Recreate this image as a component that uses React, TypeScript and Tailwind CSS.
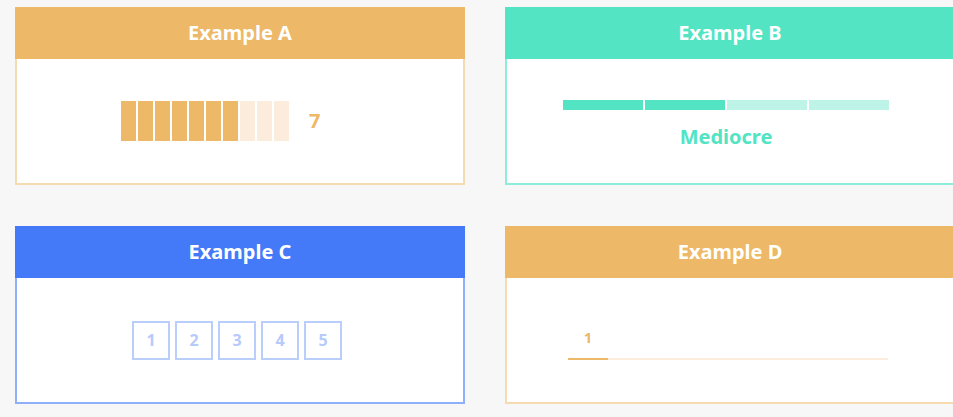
const font = "font-['Noto_Sans','Open_Sans',sans-serif]";

function Card({
  title,
  header,
  border,
  children,
}: {
  title: string;
  header: string;
  border: string;
  children: React.ReactNode;
}) {
  return (
    <div className="w-[450px] shrink-0">
      <div className={`h-[52px] flex items-center justify-center text-white text-[20px] font-bold ${header}`}>
        {title}
      </div>
      <div className={`h-[126px] border-2 border-t-0 bg-white flex items-center justify-center pr-[6px] ${border}`}>
        {children}
      </div>
    </div>
  );
}

export default function App() {
  const score = 7;
  return (
    <div className={`min-h-[417px] w-[953px] overflow-hidden bg-[#f7f7f7] pl-[15px] pt-[7px] ${font}`}>
      <div className="flex flex-col gap-[41px]">
        <div className="flex gap-[40px]">
          {/* Example A — segmented score */}
          <Card title="Example A" header="bg-[#edb867]" border="border-[#f6dbb1]">
            <div className="flex items-center">
              <div className="flex gap-[2px]">
                {Array.from({ length: 10 }, (_, i) => (
                  <div
                    key={i}
                    className={`w-[15px] h-[40px] ${i < score ? "bg-[#edb867]" : "bg-[#fbecdb]"}`}
                  />
                ))}
              </div>
              <span className="ml-[20px] w-[44px] text-[20px] font-bold text-[#edb867]">{score}</span>
            </div>
          </Card>

          {/* Example B — strength meter */}
          <Card title="Example B" header="bg-[#52e4c3]" border="border-[#8ceed8]">
            <div className="flex flex-col items-center pt-[7px] pr-[2px] gap-[15px]">
              <div className="flex gap-[2px]">
                {[0, 1, 2, 3].map((i) => (
                  <div key={i} className={`w-[80px] h-[10px] ${i < 2 ? "bg-[#52e4c3]" : "bg-[#bef4e7]"}`} />
                ))}
              </div>
              <span className="text-[20px] leading-6 font-bold text-[#52e4c3]">Mediocre</span>
            </div>
          </Card>
        </div>

        <div className="flex gap-[40px]">
          {/* Example C — numbered boxes */}
          <Card title="Example C" header="bg-[#4479f7]" border="border-[#8eb0fa]">
            <div className="flex gap-[5px]">
              {[1, 2, 3, 4, 5].map((n) => (
                <div
                  key={n}
                  className="w-[38px] h-[39px] border-2 border-[#bacefb] flex items-center justify-center text-[16px] font-bold text-[#b6cafb]"
                >
                  {n}
                </div>
              ))}
            </div>
          </Card>

          {/* Example D — progress line */}
          <Card title="Example D" header="bg-[#edb867]" border="border-[#f6dbb1]">
            <div className="flex flex-col pt-[7px] pl-[2px]">
              <div className="w-[40px] h-5 text-center text-[15px] leading-5 font-bold text-[#edb867]">1</div>
              <div className="mt-[11px] w-[320px] h-[2px] bg-[#fbecdb]">
                <div className="w-[40px] h-full bg-[#edb867]" />
              </div>
            </div>
          </Card>
        </div>
      </div>
    </div>
  );
}
